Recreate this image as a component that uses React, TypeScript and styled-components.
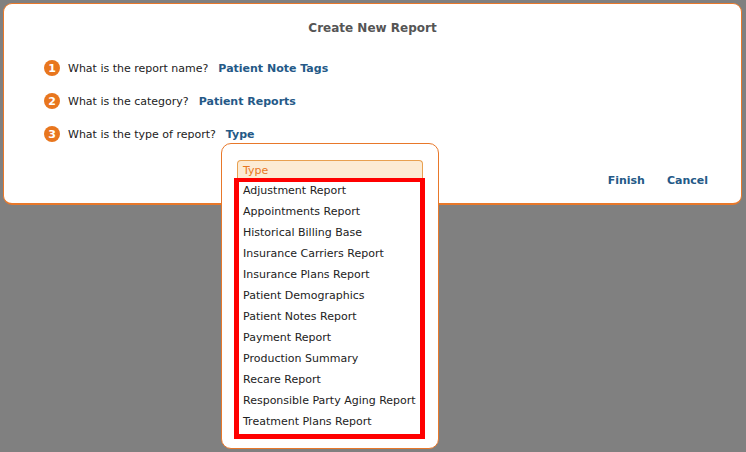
import styled, { createGlobalStyle } from "styled-components";
import { FC } from "react";

const GlobalStyle = createGlobalStyle`
	html, body {
		margin: 0;
		padding: 0;
		background: #808080;
		font-family: "DejaVu Sans", Verdana, sans-serif;
	}
`;

const steps = [
	{ question: "What is the report name?", answer: "Patient Note Tags" },
	{ question: "What is the category?", answer: "Patient Reports" },
	{ question: "What is the type of report?", answer: "Type" },
];

const reportTypes = [
	"Adjustment Report",
	"Appointments Report",
	"Historical Billing Base",
	"Insurance Carriers Report",
	"Insurance Plans Report",
	"Patient Demographics",
	"Patient Notes Report",
	"Payment Report",
	"Production Summary",
	"Recare Report",
	"Responsible Party Aging Report",
	"Treatment Plans Report",
];

const App: FC = () => {
	return (
		<Page>
			<GlobalStyle />
			<Dialog>
				<Title>Create New Report</Title>
				<Steps>
					{steps.map((step, i) => (
						<Step key={step.question}>
							<Badge>{i + 1}</Badge>
							<Question>{step.question}</Question>
							<Answer>{step.answer}</Answer>
						</Step>
					))}
				</Steps>
				<Footer>
					<Action>Finish</Action>
					<Action>Cancel</Action>
				</Footer>
			</Dialog>

			{/* Type picker popup */}
			<Popup>
				<TypeInput>Type</TypeInput>
				<OptionList>
					{reportTypes.map((t) => (
						<Option key={t}>{t}</Option>
					))}
				</OptionList>
			</Popup>
		</Page>
	);
};

export default App;

const Page = styled.div`
	position: relative;
	width: 746px;
	height: 452px;
	padding: 3px 4px 0 3px;
	box-sizing: border-box;
`;

const Dialog = styled.div`
	height: 202px;
	box-sizing: border-box;
	background: #fff;
	border: 1px solid #e8782a;
	border-bottom-width: 2px;
	border-radius: 9px;
	display: flex;
	flex-direction: column;
`;

const Title = styled.h1`
	margin: 0;
	padding-top: 16px;
	text-align: center;
	font-size: 12px;
	font-weight: bold;
	color: #555;
	line-height: 16px;
`;

const Steps = styled.div`
	display: flex;
	flex-direction: column;
	gap: 17px;
	padding: 24px 0 0 40px;
`;

const Step = styled.div`
	display: flex;
	align-items: center;
	height: 16px;
	font-size: 11px;
`;

const Badge = styled.span`
	width: 16px;
	height: 16px;
	border-radius: 50%;
	background: #e8761e;
	color: #fff;
	font-weight: bold;
	font-size: 11px;
	display: flex;
	align-items: center;
	justify-content: center;
	margin-right: 8px;
`;

const Question = styled.span`
	color: #222;
	margin-right: 10px;
`;

const Answer = styled.span`
	color: #245987;
	font-weight: bold;
`;

const Footer = styled.div`
	margin-top: auto;
	display: flex;
	justify-content: flex-end;
	gap: 22px;
	padding: 0 33px 16px 0;
`;

const Action = styled.span`
	color: #245987;
	font-weight: bold;
	font-size: 11px;
`;

const Popup = styled.div`
	position: absolute;
	left: 221px;
	top: 143px;
	width: 218px;
	height: 306px;
	box-sizing: border-box;
	background: #fff;
	border: 1px solid #e8782a;
	border-radius: 10px;
	padding: 16px 15px 0 15px;
`;

const TypeInput = styled.div`
	width: 186px;
	height: 18px;
	box-sizing: border-box;
	background: #fcebd4;
	border: 1px solid #e8a050;
	border-bottom: none;
	border-radius: 4px 4px 0 0;
	color: #e8761e;
	font-size: 11px;
	line-height: 19px;
	padding-left: 5px;
`;

const OptionList = styled.ul`
	list-style: none;
	margin: 0 0 0 -3px;
	padding: 0 0 0 4px;
	width: 191px;
	box-sizing: border-box;
	border: 5px solid #ff0000;
	border-top-width: 4px;
	background: #fff;
`;

const Option = styled.li`
	font-size: 11px;
	color: #222;
	height: 18px;
	line-height: 18px;
	padding-bottom: 3px;
	white-space: nowrap;
`;
